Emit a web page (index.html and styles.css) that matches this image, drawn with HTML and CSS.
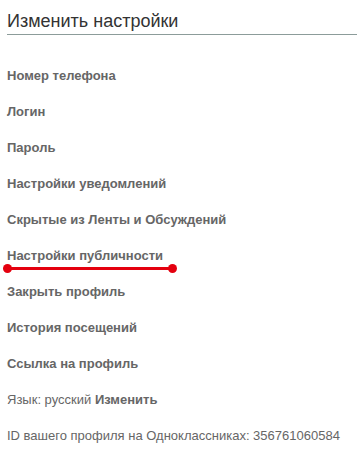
FILE: index.html
```html
<!DOCTYPE html>
<html lang="ru">
  <head>
    <meta charset="UTF-8" />
    <title>Изменить настройки</title>
    <link rel="stylesheet" href="styles.css">
  </head>
  <body>
    <div class="settings">
      <h1>Изменить настройки</h1>

      <ul class="menu">
        <li><a href="#">Номер телефона</a></li>
        <li><a href="#">Логин</a></li>
        <li><a href="#">Пароль</a></li>
        <li><a href="#">Настройки уведомлений</a></li>
        <li><a href="#">Скрытые из Ленты и Обсуждений</a></li>
        <li class="marked">
          <a href="#">Настройки публичности</a>
          <span class="mark"><i class="dot left"></i><i class="dot right"></i></span>
        </li>
        <li><a href="#">Закрыть профиль</a></li>
        <li><a href="#">История посещений</a></li>
        <li><a href="#">Ссылка на профиль</a></li>
        <li class="plain">Язык: русский <a href="#">Изменить</a></li>
        <li class="plain">ID вашего профиля на Одноклассниках: 356761060584</li>
      </ul>
    </div>
  </body>
</html>
```

FILE: styles.css
```css
* {
  margin: 0;
  padding: 0;
  box-sizing: border-box;
}

body {
  font-family: "Liberation Sans", Arial, sans-serif;
  background: #fff;
  color: #666;
}

.settings {
  padding: 0 1px 0 7px;
}

h1 {
  margin-top: 10px;
  font-size: 18px;
  font-weight: normal;
  line-height: 22px;
  color: #333;
  padding-bottom: 2px;
  border-bottom: 1px solid #8c9c9a;
}

.menu {
  list-style: none;
  margin-top: 23px;
}

.menu li {
  font-size: 13px;
  line-height: 36px;
  height: 36px;
}

.menu a {
  color: #666;
  font-weight: bold;
  text-decoration: none;
}

.marked {
  position: relative;
}

/* red underline annotation */
.mark {
  position: absolute;
  left: 0;
  top: 29px;
  width: 166px;
  height: 3px;
  background: #e4000f;
}

.dot {
  position: absolute;
  top: -3px;
  width: 9px;
  height: 9px;
  border-radius: 50%;
  background: #e4000f;
}

.dot.left {
  left: -4px;
}

.dot.right {
  right: -4px;
}
```
